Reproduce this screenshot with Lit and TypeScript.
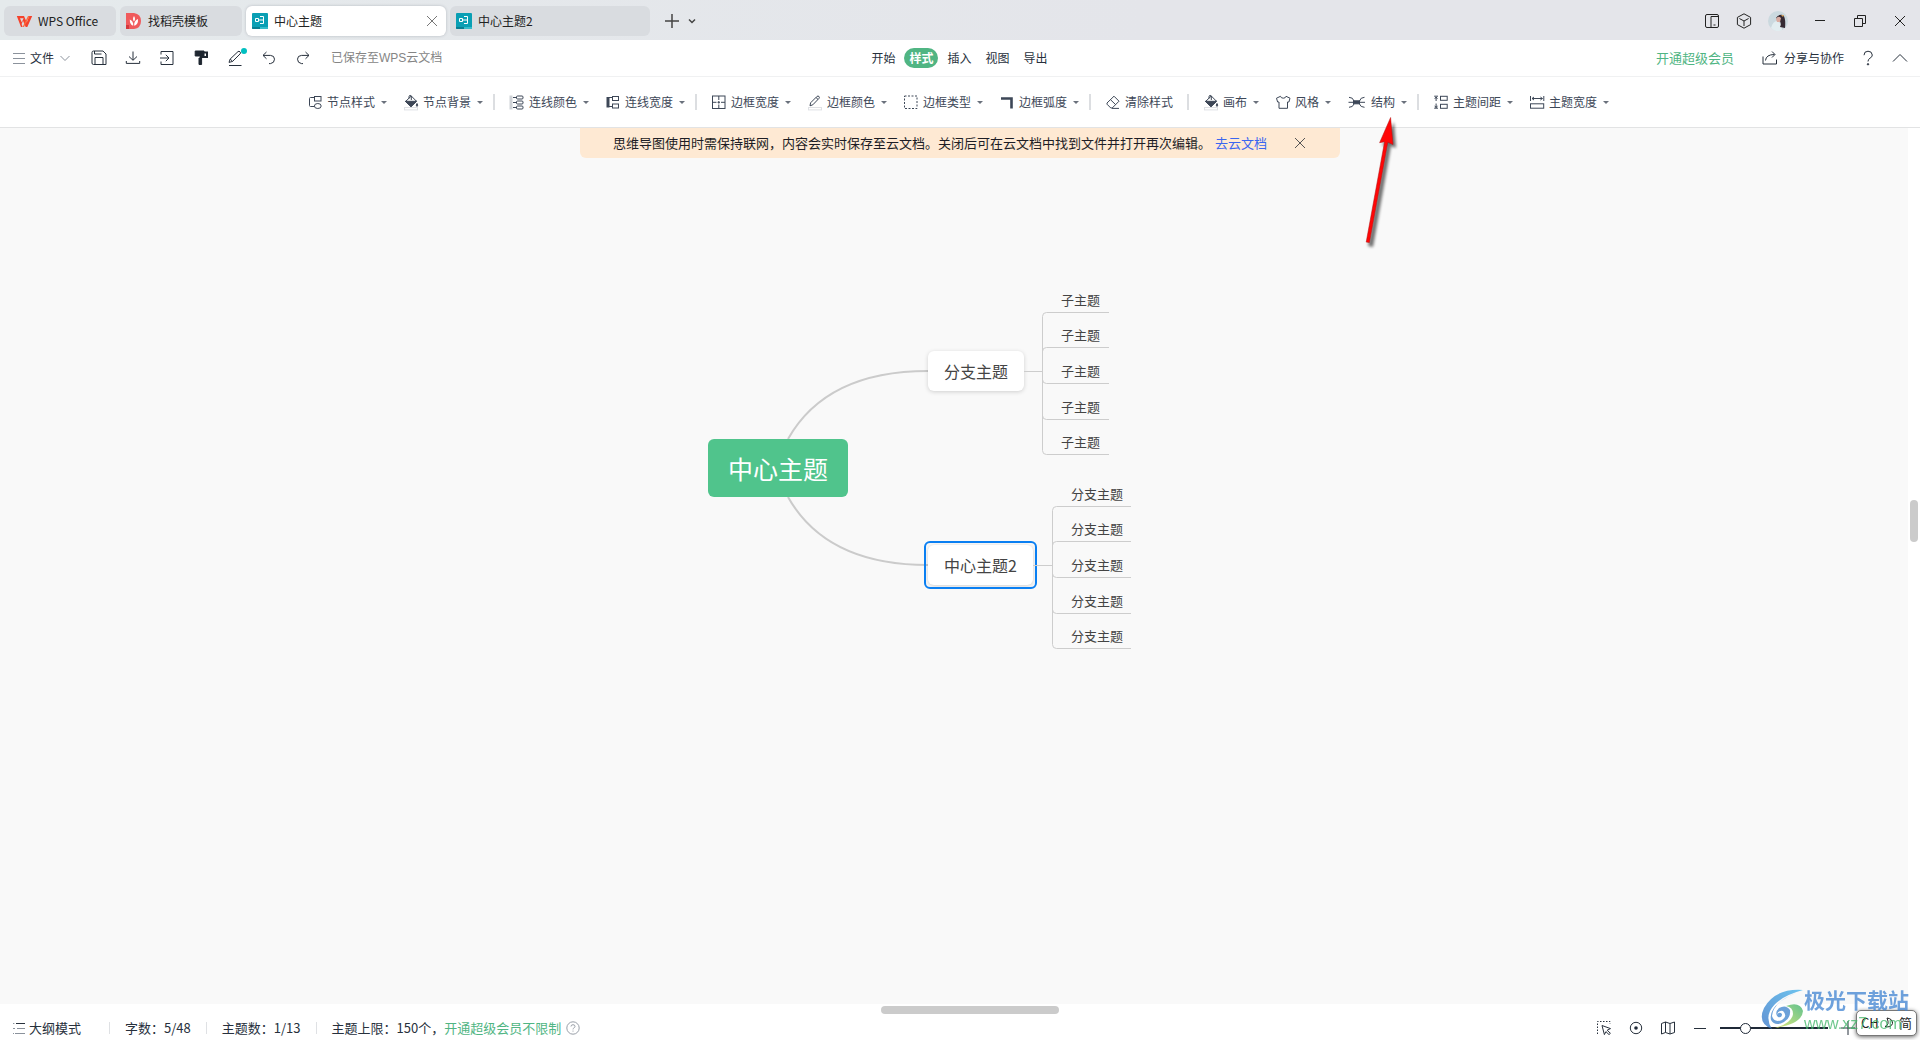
import { LitElement, html, css, svg, nothing } from "lit";
import type { TemplateResult, SVGTemplateResult } from "lit";
import { customElement, property, state } from "lit/decorators.js";
import { classMap } from "lit/directives/class-map.js";
import { styleMap } from "lit/directives/style-map.js";

const bucket = svg`
  <path d="M2.5 7.5 8.3 2 13.4 7.2 8 12.4Z" fill="none" stroke="#3d4757"/>
  <path d="M2.3 7.3H13.6L8 12.8Z" fill="#3d4757"/>
  <path d="M6 4.5V2.2Q7 .6 8.3 2V6" fill="none" stroke="#3d4757"/>
  <path d="M14 9.5Q15.4 11.6 14 12.4Q12.6 11.6 14 9.5Z" fill="#3d4757"/>
  <rect x="1.5" y="13.5" width="13" height="2.4" fill="#fff" stroke="#dfe1e5"/>`;

const ICONS: Record<string, SVGTemplateResult> = {
  nodeStyle: svg`<rect x="7.5" y="2.5" width="6.5" height="4.5"/><ellipse cx="10.8" cy="12" rx="3.4" ry="2.5"/><path d="M7.5 3.5H3.5Q2.5 3.5 2.5 4.5V11.5Q2.5 12.5 3.5 12.5H7.2"/>`,
  bucket,
  lineColor: svg`<path d="M2 1.5V15.5" stroke="#cfd2d6" stroke-width="3"/><rect x="7.5" y="2" width="6.5" height="3" rx="1"/><rect x="7.5" y="7" width="6.5" height="3" rx="1"/><rect x="7.5" y="12" width="6.5" height="3" rx="1"/><path d="M4 3.5H7.5M4 8.5H7.5M4 13.5H7.5"/>`,
  lineWidth: svg`<path d="M3 3V13.5" stroke-width="3"/><path d="M2 3.5H7.5M2 12.5H7.5"/><rect x="7.5" y="2.5" width="6" height="4"/><rect x="7.5" y="10" width="6" height="4"/>`,
  borderWidth: svg`<rect x="1.5" y="2" width="12.5" height="12.5"/><path d="M7.8 2V6M7.8 10.5V14.5M1.5 8.3H5.5M10 8.3H14M7.8 7V9.6M6.5 8.3H9"/>`,
  pencil: svg`<path d="M3 11.8 3.6 8.8 10 2.4Q11 1.6 12 2.5Q12.8 3.4 12 4.4L5.8 10.8ZM9 3.5 11 5.4"/><rect x="1.5" y="13.5" width="13" height="2.4" fill="#fff" stroke="#dfe1e5"/>`,
  borderType: svg`<rect x="1.5" y="2" width="12.5" height="12.5" stroke-dasharray="2 1.5"/>`,
  corner: svg`<path d="M2 4.5H12.5V14.5" stroke-width="2.6"/>`,
  eraser: svg`<path d="M2 9 9 2.2 14 7.2 7.2 14H5.8L2 10.2ZM5.5 5.7 10.7 10.7M7 14.4H14"/>`,
  shirt: svg`<path d="M5.5 2.3 1.5 4.2 2.6 8H4V14.3H12.5V8H13.9L15 4.2 11 2.3Q10.6 4.2 8.3 4.2Q6 4.2 5.5 2.3Z"/>`,
  structure: svg`<rect x="6.5" y="6.8" width="6" height="3" fill="#3d4757" stroke="#3d4757"/><path d="M2 3.3Q6 3.3 7 7M2 13.3Q6 13.3 7 10M1.5 8.3H6M17.5 3.3Q13.5 3.3 12.5 7M17.5 13.3Q13.5 13.3 12.5 10M13 8.3H18"/>`,
  spacing: svg`<path d="M1.2 2.2H5M1.2 14.2H5M3.1 3V7M3.1 9.5V14" /><path d="M1.8 4.8 3.1 3 4.4 4.8M1.8 11.8 3.1 13.6 4.4 11.8"/><rect x="7.5" y="2.3" width="6.7" height="4"/><rect x="7.5" y="10.3" width="6.7" height="4"/>`,
  topicWidth: svg`<path d="M1.5 2V7M14.8 2V7M3 4.5H13.5"/><path d="M5 3 3 4.5 5 6M11.4 3 13.4 4.5 11.4 6"/><rect x="1.5" y="9.8" width="13.2" height="4.4"/>`,
  save: svg`<path d="M1 2.5Q1 1 2.5 1H12L15 4V14.5H2.5Q1 14.5 1 13ZM4 14.5V7.5H12V14.5M3.5 1V4H10.5"/>`,
  download: svg`<path d="M8 1.5V10M4 6.5 8 10.3 12 6.5M1.3 11V13.4H14.7V11"/>`,
  exportTo: svg`<path d="M2 4.5V1.5H14V14.5H2V11.5M1 8H9.5M6.8 4.8 10 8 6.8 11.2"/>`,
  roller: svg`<path d="M2.2 1H11V6H2.2Z" fill="#1f2630" stroke="#1f2630"/><path d="M11 2.6H14V7H7.8V8" stroke="#1f2630" stroke-width="2"/><path d="M6 8H8.6V14.5H6Z" fill="#1f2630" stroke="#1f2630"/>`,
  pen: svg`<path d="M2 12.4 3.2 9 11 1.6Q12 .8 13 1.8Q14 2.8 13.2 3.8L5.6 11.4ZM3.2 9 5.6 11.4M2 15.5H14.5"/>`,
  undo: svg`<path d="M5.5 2 2 5.4 5.5 8.8M2 5.4H9.5Q13.5 5.6 13.5 9.2Q13.5 13 9.5 13.6H8"/>`,
  redo: svg`<path d="M10.5 2 14 5.4 10.5 8.8M14 5.4H6.5Q2.5 5.6 2.5 9.2Q2.5 13 6.5 13.6H8"/>`,
  share: svg`<path d="M1 6.5V14H14.5V9.5"/><path d="M3.5 10.5Q4 4.5 12.5 4.5M10 1.5 13 4.5 10 7.5"/>`,
  help: svg`<path d="M4 5.2Q4 1.2 8 1.2T12.3 5Q12.3 7 10 8.2Q8 9.3 8 11.5"/><circle cx="8" cy="14.3" r=".7" fill="#3d4757"/>`,
  collapse: svg`<path d="M1 11.5 8 4.5 15 11.5"/>`,
  split: svg`<rect x="1.5" y="1.5" width="13" height="13" rx="1.5"/><path d="M7 14.5V3.5H14.5M9.5 12H11.5"/>`,
  cube: svg`<path d="M8 .8 14.6 4.4V11.6L8 15.2 1.4 11.6V4.4ZM3.4 5.5 8 8 12.6 5.5M8 8V13"/>`,
  minimize: svg`<path d="M3 7.5H13"/>`,
  restore: svg`<path d="M2.5 5.5H10.5V13.5H2.5ZM5.5 5.5V2.5H13.5V10.5H10.5"/>`,
  close: svg`<path d="M3 3 13 13M13 3 3 13"/>`,
  plus: svg`<path d="M8 1V15M1 8H15"/>`,
  addTab: svg`<path d="M8 1V15M1 8H15" stroke-width="1.5"/>`,
  minus: svg`<path d="M2 8.5H14"/>`,
  chevron: svg`<path d="M3.5 6 8 10.5 12.5 6"/>`,
  caret: svg`<path d="M5 6.5 8 9.5 11 6.5" stroke-width="1.5"/>`,
  menu: svg`<path d="M2 3.5H14M2 8.5H14M2 13.5H14"/>`,
  outline: svg`<path d="M5 3.5H14" /><path d="M6 8.5H14M4 13.5H14M2 3.5H3.4M2 8.5H4M2 13.5H3" stroke="#8b929c"/>`,
  selectArea: svg`<path d="M1.5 14V1.5H14V4" stroke-dasharray="1.5 1.5"/><path d="M6 5.5 14.5 8.6 11.2 10.2 14.4 13.3 13 14.6 9.9 11.6 8.4 14.6Z"/>`,
  target: svg`<circle cx="8" cy="8" r="5.7"/><circle cx="8" cy="8" r="1.8" fill="#1f2937" stroke="none"/>`,
  map: svg`<path d="M1.5 3.5 5.5 2 10 3.5 14.5 2V12.5L10 14 5.5 12.5 1.5 14ZM5.5 2V12.5M10 3.5V14"/>`,
  hint: svg`<circle cx="8" cy="8" r="6.2"/><path d="M6 6.5Q6 4.7 8 4.7T10 6.4Q10 7.4 8.8 8Q8 8.5 8 9.4M8 10.6V11.6"/>`,
  wps: svg`<path d="M.8 3H8L10.8 9.5 13.2 3H16.2L11.3 14H9.7L7 7.8 5.6 11 6.6 14H5Z" fill="#f5422c" stroke="none"/><path d="M4 5.2 5.7 9.2 7.6 5.2Z" fill="#d9dde0" stroke="none"/><path d="M6.6 14 12 3H13.6L8 14Z" fill="#ff6a3c" stroke="none"/>`,
  docer: svg`<path d="M0 0H8Q15 1 15 8T8 16H0Z" fill="#f05a5c" stroke="none"/><path d="M0 12H3V16H0Z" fill="#d4383c" stroke="none"/><path d="M8 3Q10 6 8 8.6Q6 6 8 3ZM3.8 6.5Q6.6 7.3 7.2 10.6V12.8Q3.6 11.5 3.8 6.5ZM12 6Q12.4 11.6 8.2 12.8V10.8Q9 7 12 6Z" fill="#fff" stroke="none"/>`,
  mind: svg`<path d="M1 0H15Q16 0 16 1V16H1Q0 16 0 15V1Q0 0 1 0Z" fill="#0a9fb4" stroke="none"/><path d="M0 14H8V16H1Q0 16 0 15Z" fill="#087f92" stroke="none"/><path d="M8 14H16V16H8Z" fill="#36bccb" stroke="none"/><path d="M3.5 5.5H6.5V8.5H3.5ZM6.5 7H11.5M8 3.5H11.5V10.5H8" stroke="#fff"/>`,
};

@customElement("wps-icon")
export class WpsIcon extends LitElement {
  @property() name = "";
  @property({ type: Number }) width = 16;

  static styles = css`
    :host { display: inline-flex; flex: none; }
    svg { display: block; overflow: visible; }
  `;

  render() {
    return html`<svg aria-hidden="true" width=${this.width} height="16" viewBox="0 0 ${this.width} 16"
      fill="none" stroke="currentColor" stroke-width="1">${ICONS[this.name]}</svg>`;
  }
}

const FONT = css`"Noto Sans CJK SC", "Noto Sans", sans-serif`;

const CONTROL = css`
  :host, * { box-sizing: border-box; }
  button {
    font: inherit; color: inherit; background: none; border: 0; padding: 0; margin: 0;
    display: flex; align-items: center; white-space: nowrap;
  }
  a { text-decoration: none; }
`;

@customElement("title-bar")
export class TitleBar extends LitElement {
  static styles = [CONTROL, css`
    :host {
      display: flex; align-items: center; height: 40px; padding: 2px 12px 0 4px;
      background: linear-gradient(90deg, #e5eaec, #e4e5ea 60%); color: #222;
      font-size: 12px; line-height: 16px;
    }
    .tabs { display: flex; gap: 4px; }
    .tab {
      display: flex; align-items: center; height: 30px; padding: 0 6px;
      background: #d9dce0; border-radius: 6px;
    }
    .tab .open { gap: 6px; flex: 1; }
    .home { padding: 0 12px; width: 112px; }
    .docer { width: 122px; }
    .doc { width: 200px; }
    .active { background: #fff; box-shadow: 0 0 3px #b4b8bf; }
    .close { color: #777; }
    .new { margin-left: 14px; color: #444; gap: 4px; }
    .window { display: flex; align-items: center; margin-left: auto; gap: 24px; color: #222; }
    .tools { display: flex; align-items: center; gap: 16px; }
    .avatar { display: block; }
  `];

  render() {
    return html`
      <div class="tabs">
        <div class="tab home"><button class="open"><wps-icon name="wps"></wps-icon>WPS Office</button></div>
        <div class="tab docer"><button class="open"><wps-icon name="docer"></wps-icon>找稻壳模板</button></div>
        <div class="tab doc active">
          <button class="open"><wps-icon name="mind"></wps-icon>中心主题</button>
          <button class="close" aria-label="关闭"><wps-icon name="close"></wps-icon></button>
        </div>
        <div class="tab doc"><button class="open"><wps-icon name="mind"></wps-icon>中心主题2</button></div>
      </div>
      <div class="tabs new">
        <button aria-label="新建"><wps-icon name="addTab"></wps-icon></button>
        <button aria-label="标签列表"><wps-icon name="caret"></wps-icon></button>
      </div>
      <div class="window">
        <div class="tools">
          <button aria-label="分屏"><wps-icon name="split"></wps-icon></button>
          <button aria-label="应用"><wps-icon name="cube"></wps-icon></button>
          <button aria-label="账号">
            <svg class="avatar" width="20" height="20" viewBox="0 0 20 20">
              <circle cx="10" cy="10" r="10" fill="#cbd9df"/>
              <path d="M3 17Q5 10 9 10L13 13 14 19Q8 22 3 17Z" fill="#e2edf0"/>
              <path d="M8 7Q10 3 15 4Q18 7 17 17L12 16Q14 12 11 9Z" fill="#352a33"/>
              <path d="M8 8Q10 4 13 7L12 11 9 11Z" fill="#d9aca2"/>
              <path d="M13 4 16 4 15 6Z" fill="#d9a35b"/>
            </svg>
          </button>
        </div>
        <button aria-label="最小化"><wps-icon name="minimize"></wps-icon></button>
        <button aria-label="还原"><wps-icon name="restore"></wps-icon></button>
        <button aria-label="关闭窗口"><wps-icon name="close"></wps-icon></button>
      </div>`;
  }
}

@customElement("menu-bar")
export class MenuBar extends LitElement {
  @state() private current = "样式";

  static styles = [CONTROL, css`
    :host {
      display: grid; grid-template-columns: 1fr auto 1fr; align-items: center; height: 37px;
      padding: 0 12px 0 11px; background: #fff; border-bottom: 1px solid #f0f1f2;
      color: #27303c; font-size: 12px; line-height: 16px;
    }
    .left { display: flex; align-items: center; gap: 18px; }
    .file { gap: 3px; }
    .file wps-icon { color: #8b929c; }
    .pen { position: relative; }
    .pen::after {
      content: ""; position: absolute; right: -4px; top: -2px; width: 6px; height: 6px;
      border-radius: 50%; background: #00bfc0;
    }
    .saved { margin-left: 2px; color: #858585; font-family: "Liberation Sans", "Noto Sans CJK SC", sans-serif; }
    .menus { display: flex; gap: 4px; }
    .menus button { height: 20px; padding: 0 5px; border-radius: 10px; }
    .menus .on { background: #50b583; color: #fff; font-weight: 700; }
    .right { display: flex; align-items: center; justify-content: flex-end; gap: 16px; }
    .vip { color: #50b583; font-size: 13px; margin-right: 12px; }
    .share { gap: 6px; }
  `];

  render() {
    return html`
      <div class="left">
        <button class="file"><wps-icon name="menu"></wps-icon>文件<wps-icon name="chevron"></wps-icon></button>
        <button aria-label="保存"><wps-icon name="save"></wps-icon></button>
        <button aria-label="下载"><wps-icon name="download"></wps-icon></button>
        <button aria-label="导出到"><wps-icon name="exportTo"></wps-icon></button>
        <button aria-label="格式刷"><wps-icon name="roller"></wps-icon></button>
        <button class="pen" aria-label="画笔"><wps-icon name="pen"></wps-icon></button>
        <button aria-label="撤销"><wps-icon name="undo"></wps-icon></button>
        <button aria-label="恢复"><wps-icon name="redo"></wps-icon></button>
        <span class="saved">已保存至WPS云文档</span>
      </div>
      <nav class="menus">
        ${["开始", "样式", "插入", "视图", "导出"].map((name) => html`
          <button class=${classMap({ on: name === this.current })} @click=${() => (this.current = name)}>${name}</button>`)}
      </nav>
      <div class="right">
        <a class="vip" href="#vip">开通超级会员</a>
        <button class="share"><wps-icon name="share"></wps-icon>分享与协作</button>
        <button aria-label="帮助"><wps-icon name="help"></wps-icon></button>
        <button aria-label="收起功能区"><wps-icon name="collapse"></wps-icon></button>
      </div>`;
  }
}

interface Tool { icon: string; label: string; plain?: boolean; wide?: boolean; }

const GROUPS: Tool[][] = [
  [{ icon: "nodeStyle", label: "节点样式" }, { icon: "bucket", label: "节点背景" }],
  [{ icon: "lineColor", label: "连线颜色" }, { icon: "lineWidth", label: "连线宽度" }],
  [
    { icon: "borderWidth", label: "边框宽度" }, { icon: "pencil", label: "边框颜色" },
    { icon: "borderType", label: "边框类型" }, { icon: "corner", label: "边框弧度" },
  ],
  [{ icon: "eraser", label: "清除样式", plain: true }],
  [{ icon: "bucket", label: "画布" }, { icon: "shirt", label: "风格" }, { icon: "structure", label: "结构", wide: true }],
  [{ icon: "spacing", label: "主题间距" }, { icon: "topicWidth", label: "主题宽度" }],
];

@customElement("style-toolbar")
export class StyleToolbar extends LitElement {
  static styles = [CONTROL, css`
    :host {
      display: flex; justify-content: center; align-items: center; height: 51px;
      background: #fff; border-bottom: 1px solid #e2e3e4; color: #3d4757;
      font-size: 12px; line-height: 16px;
    }
    .group { display: flex; align-items: center; }
    .group + .group::before { content: ""; width: 2px; height: 16px; margin-right: 8px; background: #dcdee1; }
    .tool { padding: 0 10px 0 6px; gap: 4px; height: 30px; }
    .plain { padding-right: 14px; }
    .arrow { width: 6px; margin-left: 2px; border: 3px solid transparent; border-top-color: #6a717c; border-bottom: 0; }
  `];

  render() {
    return GROUPS.map((group) => html`
      <div class="group">
        ${group.map((tool) => html`
          <button class=${classMap({ tool: true, plain: !!tool.plain })}>
            <wps-icon name=${tool.icon} width=${tool.wide ? 20 : 16}></wps-icon>${tool.label}
            ${tool.plain ? nothing : html`<span class="arrow"></span>`}
          </button>`)}
      </div>`);
  }
}

interface Branch {
  label: string; top: number; selected?: boolean; width: number;
  trunk: number; end: number; lines: number[]; child: string;
}

const BRANCHES: Branch[] = [
  { label: "分支主题", top: 61, width: 96, trunk: 338, end: 405, lines: [22, 57, 93, 129, 164], child: "子主题" },
  { label: "中心主题2", top: 255, width: 105, selected: true, trunk: 348, end: 427, lines: [216, 251, 287, 323, 358], child: "分支主题" },
];

@customElement("mind-canvas")
export class MindCanvas extends LitElement {
  @state() private notice = true;

  static styles = [CONTROL, css`
    :host {
      display: grid; flex: 1; grid-template: 1fr 12px / 1fr 12px; position: relative;
      background: #fff; min-height: 500px;
    }
    .sheet { background: #f9f9f9; padding-top: 162px; }
    .board { position: relative; width: 500px; height: 380px; margin: 0 auto; }
    .links { position: absolute; inset: 0; }
    .node { position: absolute; display: flex; align-items: center; justify-content: center; border-radius: 6px; white-space: nowrap; }
    .root { left: 4px; top: 149px; width: 140px; height: 58px; background: #50c48c; color: #fff; font-size: 25px; line-height: 32px; }
    .branch { left: 224px; height: 40px; background: #fff; color: #444; font-size: 16px; line-height: 20px; box-shadow: 0 1px 4px #0000002b; }
    .selected::before { content: ""; position: absolute; inset: -4px; border: 2px solid #0a7ff2; border-radius: 6px; }
    .leaf { position: absolute; color: #444; font-size: 13px; line-height: 20px; white-space: nowrap; }
    .notice {
      position: absolute; top: 0; left: 0; right: 0; margin: 0 auto; width: 760px; height: 30px;
      display: flex; align-items: center; padding: 0 32px 0 33px; background: #fee9d3; color: #1d1d25;
      border-radius: 0 0 6px 6px; font-size: 13px; line-height: 20px; white-space: nowrap;
    }
    .notice a { color: #3a66f0; margin-left: 4px; }
    .notice button { margin-left: auto; color: #555; }
    .vbar, .hbar { display: flex; align-items: center; justify-content: center; }
    .vbar { padding-bottom: 90px; }
    .vbar span { width: 8px; height: 42px; border-radius: 4px; background: #cbcbcb; }
    .hbar { grid-column: 1 / -1; padding-left: 20px; }
    .hbar span { width: 178px; height: 8px; border-radius: 4px; background: #cbcbcb; }
  `];

  private leafLinks(b: Branch): SVGTemplateResult {
    const mid = b.top + 20;
    const x = b.trunk + 0.5;
    return svg`
      <path d="M${224 + b.width} ${mid + 0.5}H${x}"/>
      ${b.lines.map((y) => {
        const ly = y + 0.5;
        const bend = ly > mid ? -4 : 4;
        return svg`<path d="M${x} ${mid + 0.5}V${ly + bend}Q${x} ${ly} ${x + 4} ${ly}H${b.end}"/>`;
      })}`;
  }

  render() {
    return html`
      <div class="sheet">
        <div class="board">
          <svg class="links" width="500" height="380" fill="none" stroke="#cbcbcb">
            <path stroke-width="2" d="M84 149C110 103 156 81 224 81"/>
            <path stroke-width="2" d="M84 207C110 253 156 275 224 275"/>
          </svg>
          <div class="node root">中心主题</div>
          ${BRANCHES.map((b) => html`
            <div class=${classMap({ node: true, branch: true, selected: !!b.selected })}
              style=${styleMap({ top: `${b.top}px`, width: `${b.width}px` })}>${b.label}</div>
            ${b.lines.map((y) => html`<div class="leaf"
              style=${styleMap({ left: `${b.trunk + 19}px`, top: `${y - 22}px` })}>${b.child}</div>`)}`)}
          <svg class="links" width="500" height="380" fill="none" stroke="#cdcdcd">
            ${BRANCHES.map((b) => this.leafLinks(b))}
          </svg>
        </div>
      </div>
      <div class="vbar"><span></span></div>
      <div class="hbar"><span></span></div>
      ${this.notice ? html`
        <div class="notice">
          思维导图使用时需保持联网，内容会实时保存至云文档。关闭后可在云文档中找到文件并打开再次编辑。
          <a href="#cloud">去云文档</a>
          <button aria-label="关闭提示" @click=${() => (this.notice = false)}><wps-icon name="close"></wps-icon></button>
        </div>` : nothing}`;
  }
}

@customElement("status-bar")
export class StatusBar extends LitElement {
  static styles = [CONTROL, css`
    :host {
      display: flex; align-items: center; height: 24px; padding: 0 64px 0 11px; background: #fff;
      color: #27303c; font-size: 13px; line-height: 20px; white-space: nowrap;
    }
    .outline { gap: 2px; }
    .cell { display: flex; align-items: center; }
    .cell::before { content: ""; width: 1px; height: 12px; margin: 0 15px; background: #dfe1e4; }
    .outline + .cell { margin-left: 13px; }
    .cell a { color: #50b583; }
    .cell button { margin-left: 4px; color: #999fa8; }
    .tools { margin-left: auto; display: flex; align-items: center; gap: 16px; }
    .zoom { display: flex; align-items: center; gap: 12px; }
    input {
      appearance: none; width: 108px; height: 12px; margin: 0;
      background: linear-gradient(#1f2937, #1f2937) center / 100% 2px no-repeat;
    }
    input::-webkit-slider-thumb {
      appearance: none; width: 11px; height: 11px; border-radius: 50%;
      border: 1px solid #1f2937; background: #fff;
    }
  `];

  render() {
    return html`
      <button class="outline"><wps-icon name="outline"></wps-icon>大纲模式</button>
      <span class="cell">字数：5/48</span>
      <span class="cell">主题数：1/13</span>
      <span class="cell">主题上限：150个，<a href="#vip">开通超级会员不限制</a>
        <button aria-label="说明"><wps-icon name="hint"></wps-icon></button></span>
      <div class="tools">
        <button aria-label="框选"><wps-icon name="selectArea"></wps-icon></button>
        <button aria-label="定位"><wps-icon name="target"></wps-icon></button>
        <button aria-label="导航图"><wps-icon name="map"></wps-icon></button>
        <div class="zoom">
          <button aria-label="缩小"><wps-icon name="minus"></wps-icon></button>
          <input type="range" min="0" max="100" .value=${"21"} aria-label="缩放">
          <button aria-label="放大"><wps-icon name="plus"></wps-icon></button>
        </div>
      </div>`;
  }
}

@customElement("app-root")
export class AppRoot extends LitElement {
  static styles = css`
    :host {
      display: flex; flex-direction: column; min-height: 100vh; position: relative;
      overflow: hidden; font-family: ${FONT};
    }
    .pointer { position: absolute; left: calc(50% + 400px); top: 110px; pointer-events: none; }
    .ime {
      position: absolute; right: 3px; bottom: 4px; box-sizing: border-box; width: 61px; height: 26px;
      padding: 0 4px; display: flex; align-items: center; justify-content: space-between;
      border: 1px solid #777; border-radius: 5px; background: #fff;
      box-shadow: 0 1px 4px #0009; font-size: 13px; line-height: 16px; color: #222;
    }
    .mark { position: absolute; right: 11px; bottom: 7px; display: flex; align-items: center; opacity: 0.75; pointer-events: none; }
    .words { display: flex; flex-direction: column; gap: 3px; }
    .name { color: #3f83d2; font-size: 21px; line-height: 26px; font-weight: 700; }
    .url { color: #3fb567; font: 16px/18px "Liberation Sans", sans-serif; }
  `;

  private pointer(): TemplateResult {
    return html`
      <svg class="pointer" width="50" height="145" viewBox="0 0 50 145">
        <defs><filter id="soft" x="-50%" y="-20%" width="200%" height="140%"><feGaussianBlur stdDeviation="1.6"/></filter></defs>
        <path d="M34 12 36 38 31 36 13 137 8 136 26 35 22 36Z" fill="#000" opacity=".55" filter="url(#soft)"/>
        <path d="M30.6 7.5 33 34.5 27.8 32.3 9.4 132.6 6.2 132.1 24.6 31.7 19.6 32.7Z" fill="#ff0606" stroke="#b01010" stroke-width=".5"/>
      </svg>`;
  }

  private watermark(): TemplateResult {
    return html`
      <div class="mark">
        <svg width="43" height="42" viewBox="0 0 43 42">
          <defs>
            <linearGradient id="sky" x1="1" y1="0" x2="0" y2="1"><stop offset="0" stop-color="#3fb2ec"/><stop offset="1" stop-color="#2f6fc4"/></linearGradient>
            <linearGradient id="leaf" x1="1" y1="0" x2="0" y2="1"><stop offset="0" stop-color="#2fae6a"/><stop offset="1" stop-color="#d3e04e"/></linearGradient>
          </defs>
          <path d="M42 1Q14 -1 3 19Q-4 34 11 40Q5 31 9 22Q16 8 42 1Z" fill="url(#sky)"/>
          <path d="M35 4Q12 13 11 27Q13 34 21 31Q27 27 22 22Q17 21 16 26Q18 22 21 25Q21 29 17 28Q13 24 18 19Q25 15 29 21Q30 29 23 33Q14 38 10 31Q7 16 35 4Z" fill="#3b82cd"/>
          <path d="M25 17Q39 12 42 22Q41 35 14 39Q31 34 32 25Q32 18 25 17Z" fill="url(#leaf)"/>
        </svg>
        <div class="words"><span class="name">极光下载站</span><span class="url">www.xz7.com</span></div>
      </div>`;
  }

  render() {
    return html`
      <title-bar></title-bar>
      <menu-bar></menu-bar>
      <style-toolbar></style-toolbar>
      <mind-canvas></mind-canvas>
      <status-bar></status-bar>
      ${this.pointer()}
      <div class="ime"><span>CH</span><svg width="10" height="12" viewBox="0 0 10 12" fill="none" stroke="#222"><path d="M3 1Q9 2 8.5 6.5Q7 11 1 9.5Q6 8 3 1Z"/></svg><span>简</span></div>
      ${this.watermark()}`;
  }
}
